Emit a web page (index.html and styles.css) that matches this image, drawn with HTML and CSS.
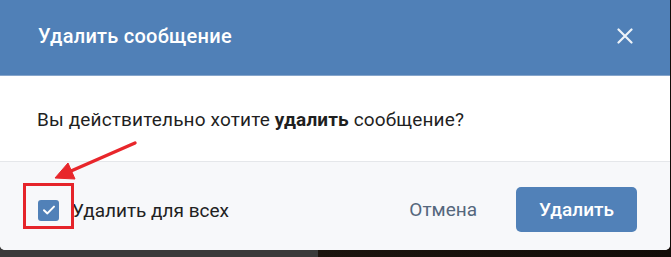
FILE: index.html
```
<!DOCTYPE html>
<html lang="ru">
<head>
<meta charset="utf-8">
<link rel="stylesheet" href="styles.css">
</head>
<body>
<div class="page">
  <div class="dialog">
    <div class="header">
      <div class="title">Удалить сообщение</div>
      <svg class="close" width="16" height="16" viewBox="0 0 16 16"><path d="M1.5 1.5 L14.5 14.5 M14.5 1.5 L1.5 14.5" stroke="#fff" stroke-width="2.2" stroke-linecap="round" fill="none" opacity="0.9"/></svg>
    </div>
    <div class="body">Вы действительно хотите <b>удалить</b> сообщение?</div>
    <div class="footer">
      <label class="check">
        <span class="box"><svg width="14" height="12" viewBox="0 0 14 12"><path d="M2 6.2 L5.4 9.4 L12 2.6" stroke="#fff" stroke-width="2" fill="none" stroke-linecap="round" stroke-linejoin="round"/></svg></span>
        <span class="check-label">Удалить для всех</span>
      </label>
      <div class="actions">
        <span class="cancel">Отмена</span>
        <span class="btn">Удалить</span>
      </div>
    </div>
  </div>
  <div class="highlight"></div>
  <svg class="arrow" width="110" height="60" viewBox="0 0 110 60">
    <path d="M95 13 L31 41" stroke="#e8262b" stroke-width="3.4" stroke-linecap="round" fill="none"/>
    <path d="M15 48 L28 33 L35 49 Z" fill="#e8262b" stroke="#e8262b" stroke-width="1" stroke-linejoin="round"/>
  </svg>
</div>
</body>
</html>
```
FILE: styles.css
```
html, body {
  margin: 0;
  padding: 0;
}
body {
  width: 671px;
  height: 257px;
  overflow: hidden;
  background: linear-gradient(90deg, #3a3a3a 0, #3a3a3a 318px, #1c140e 318px, #120c08 100%);
  font-family: Roboto, "Liberation Sans", Arial, sans-serif;
}
.page {
  position: relative;
  width: 671px;
  height: 257px;
}
.dialog {
  width: 670px;
  height: 250px;
  background: #fff;
  border-radius: 0 0 5px 5px;
  overflow: hidden;
  display: flex;
  flex-direction: column;
}
.header {
  height: 75px;
  background: #5080b7;
  border-bottom: 1px solid #86a5cb;
  display: flex;
  align-items: center;
  justify-content: space-between;
  padding: 0 37px 0 38px;
}
.title {
  color: #fff;
  font-size: 20px;
  font-weight: 500;
  letter-spacing: 0.25px;
  margin-top: -3px;
}
.close {
  display: block;
  margin-top: -4px;
}
.body {
  height: 86px;
  box-sizing: border-box;
  padding: 32px 0 0 37px;
  font-size: 19px;
  letter-spacing: 0.15px;
  color: #1f1f1f;
  border-bottom: 1px solid #e5e7ea;
}
.body b {
  font-weight: 700;
}
.footer {
  flex: 1;
  background: #f7f8fa;
  display: flex;
  align-items: center;
  justify-content: space-between;
  padding: 0 33px 0 38px;
}
.check {
  display: flex;
  align-items: center;
  gap: 13px;
  margin-top: 8px;
}
.box {
  width: 21px;
  height: 21px;
  border-radius: 3px;
  background: #5181b8;
  display: flex;
  align-items: center;
  justify-content: center;
}
.check-label {
  font-size: 19px;
  color: #222;
}
.actions {
  display: flex;
  align-items: center;
  gap: 39px;
  margin-top: 6px;
}
.cancel {
  font-size: 19px;
  color: #55677d;
}
.btn {
  display: flex;
  align-items: center;
  justify-content: center;
  width: 121px;
  height: 45px;
  border-radius: 5px;
  background: #5181b8;
  color: #fff;
  font-size: 19px;
  font-weight: 500;
}
.highlight {
  position: absolute;
  left: 23px;
  top: 183px;
  width: 45px;
  height: 40px;
  border: 3px solid #e5242a;
}
.arrow {
  position: absolute;
  left: 40px;
  top: 130px;
}
```
